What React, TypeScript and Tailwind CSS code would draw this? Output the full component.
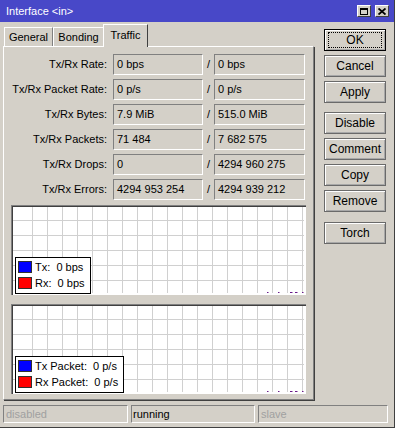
const rows = [
  { label: 'Tx/Rx Rate:', tx: '0 bps', rx: '0 bps' },
  { label: 'Tx/Rx Packet Rate:', tx: '0 p/s', rx: '0 p/s' },
  { label: 'Tx/Rx Bytes:', tx: '7.9 MiB', rx: '515.0 MiB' },
  { label: 'Tx/Rx Packets:', tx: '71 484', rx: '7 682 575' },
  { label: 'Tx/Rx Drops:', tx: '0', rx: '4294 960 275' },
  { label: 'Tx/Rx Errors:', tx: '4294 953 254', rx: '4294 939 212' },
];

const vLines = Array.from({ length: 19 }, (_, i) => 19 + i * 15);
const hLines = [13, 28, 43, 58, 73];
const dots = [254, 265, 277, 278, 282, 283, 289];

function Graph({ legend }: { legend: { color: string; text: string }[] }) {
  return (
    <div className="ml-[7px] w-[295px] h-[90px] border-t border-l border-[#808080] border-b-white border-r-white">
      <div className="relative w-full h-full bg-white border-t border-l border-[#404040] border-b-[#d4d0c8] border-r-[#d4d0c8]">
        <svg width="291" height="86" className="block">
          {vLines.map((x) => (
            <line key={x} x1={x + 0.5} y1={0} x2={x + 0.5} y2={86} stroke="#d0d0d0" strokeWidth={1} />
          ))}
          {hLines.map((y) => (
            <line key={y} x1={0} y1={y + 0.5} x2={291} y2={y + 0.5} stroke="#d0d0d0" strokeWidth={1} />
          ))}
          {dots.map((x) => (
            <rect key={x} x={x} y={85} width={1.5} height={1} fill="#6a1a8a" />
          ))}
        </svg>
        <div className="absolute left-[2px] bottom-[1px] bg-white border border-black px-[2px] pt-[3px] pb-[4px] flex flex-col gap-[4px]">
          {legend.map((l) => (
            <div key={l.text} className="flex items-center h-[12px] pr-[3px]">
              <span className={`w-[14px] h-[12px] border border-[#303030] ${l.color}`} />
              <span className="ml-[3px] whitespace-pre leading-none">{l.text}</span>
            </div>
          ))}
        </div>
      </div>
    </div>
  );
}

function Btn({ label, focus, className = '' }: { label: string; focus?: boolean; className?: string }) {
  return (
    <div
      className={`h-[22px] w-[62px] flex items-center justify-center ${
        focus ? 'border border-black' : 'border border-[#6a6a6a]'
      } shadow-[inset_1px_1px_0_#ffffff,inset_-1px_-1px_0_#a8a8a8] ${className}`}
    >
      {focus ? (
        <div className="w-[54px] h-[16px] border border-dotted border-black flex items-center justify-center text-[12px]">
          {label}
        </div>
      ) : (
        <span className="text-[12px]">{label}</span>
      )}
    </div>
  );
}

export default function App() {
  return (
    <div className="w-[395px] h-[428px] bg-[#d4d0c8] text-[11px] text-black font-['Liberation_Sans',Arial,sans-serif] flex flex-col border-r border-b border-[#404040] overflow-hidden">
      {/* title bar */}
      <div className="h-[22px] shrink-0 bg-[#4848c8] flex items-center pl-[6px] pr-[5px]">
        <span className="text-white text-[11px]">Interface &lt;in&gt;</span>
        <div className="ml-auto flex gap-[4px]">
          <div className="w-[14px] h-[12px] bg-[#d4d0c8] border border-white border-r-[#404040] border-b-[#404040] flex items-center justify-center">
            <div className="w-[8px] h-[7px] border border-black border-t-2" />
          </div>
          <div className="w-[14px] h-[12px] bg-[#d4d0c8] border border-white border-r-[#404040] border-b-[#404040] flex items-center justify-center">
            <svg width="8" height="7" viewBox="0 0 8 7">
              <path d="M0.5 0.5 L7.5 6.5 M7.5 0.5 L0.5 6.5" stroke="black" strokeWidth="1.8" />
            </svg>
          </div>
        </div>
      </div>

      {/* body */}
      <div className="flex h-[378px] shrink-0">
        <div className="ml-[3px] w-[311px] flex flex-col">
          <div className="h-[24px] flex items-end pl-[1px]">
            <div className="w-[49px] h-[19px] border-t border-l border-white border-r border-r-[#808080] flex items-center justify-center pt-[1px]">
              General
            </div>
            <div className="w-[50px] h-[19px] border-t border-l border-white flex items-center justify-center pt-[1px]">
              Bonding
            </div>
            <div className="relative z-10 -mb-px w-[45px] h-[23px] bg-[#d4d0c8] border-t border-l border-white border-r border-r-[#404040] flex items-center justify-center pb-[2px]">
              Traffic
            </div>
          </div>
          <div className="flex-1 border-t border-l border-white border-r border-b border-r-[#808080] border-b-[#808080] shadow-[1px_1px_0_#404040] pt-[7px] flex flex-col">
            <div className="flex flex-col gap-[4px]">
              {rows.map((r) => (
                <div key={r.label} className="flex items-center h-[21px]">
                  <span className="w-[103px] text-right">{r.label}</span>
                  <div className="ml-[6px] w-[90px] h-[21px] border border-[#808080] border-r-white border-b-white pl-[3px] flex items-center">
                    {r.tx}
                  </div>
                  <span className="w-[11px] pl-[4px]">/</span>
                  <div className="w-[91px] h-[21px] border border-[#808080] border-r-white border-b-white pl-[3px] flex items-center">
                    {r.rx}
                  </div>
                </div>
              ))}
            </div>
            <div className="mt-[5px] flex flex-col gap-[9px]">
              <Graph
                legend={[
                  { color: 'bg-[#0000ff]', text: 'Tx:  0 bps' },
                  { color: 'bg-[#ff0000]', text: 'Rx:  0 bps' },
                ]}
              />
              <Graph
                legend={[
                  { color: 'bg-[#0000ff]', text: 'Tx Packet:  0 p/s' },
                  { color: 'bg-[#ff0000]', text: 'Rx Packet:  0 p/s' },
                ]}
              />
            </div>
          </div>
        </div>

        <div className="ml-[10px] pt-[7px] flex flex-col gap-[4px]">
          <Btn label="OK" focus />
          <Btn label="Cancel" />
          <Btn label="Apply" />
          <Btn label="Disable" className="mt-[5px]" />
          <Btn label="Comment" />
          <Btn label="Copy" />
          <Btn label="Remove" />
          <Btn label="Torch" className="mt-[6px]" />
        </div>
      </div>

      {/* status bar */}
      <div className="mt-[5px] h-[18px] flex pl-[3px] gap-[3px]">
        <div className="w-[125px] border border-[#808080] border-r-white border-b-white pl-[2px] flex items-center text-[#a0a0a0]">
          disabled
        </div>
        <div className="w-[124px] border border-[#808080] border-r-white border-b-white pl-[1px] flex items-center">
          running
        </div>
        <div className="w-[130px] border border-[#808080] border-r-white border-b-white pl-[2px] flex items-center text-[#a0a0a0]">
          slave
        </div>
      </div>
    </div>
  );
}
